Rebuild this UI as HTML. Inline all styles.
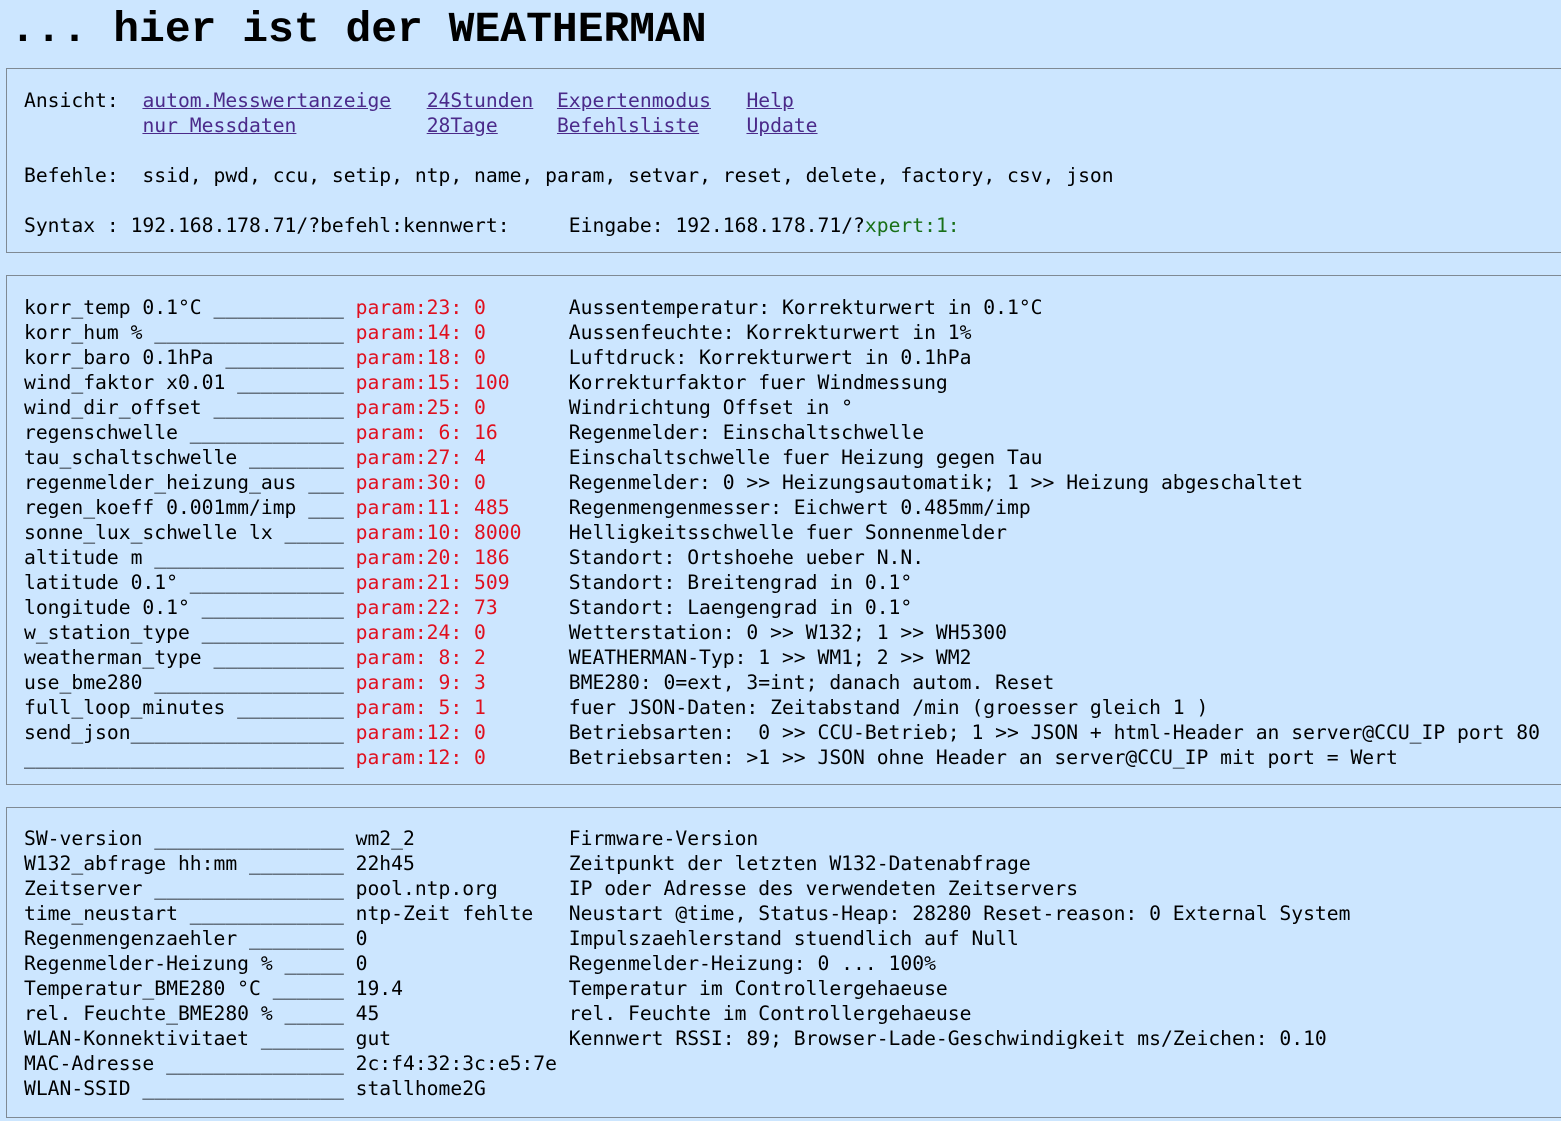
<!DOCTYPE html>
<html><head><meta charset="utf-8"><style>
html,body{margin:0;padding:0;background:#cce6ff;width:1561px;height:1121px;overflow:hidden}
body{position:relative;font-family:"Liberation Mono",monospace;color:#000}
h1{position:absolute;left:10px;top:5px;margin:0;font-size:43px;line-height:50px;font-weight:bold;white-space:pre}
.box{position:absolute;left:6px;width:1600px;border:1px solid #7f8a94;box-sizing:border-box}
.l{position:absolute;left:17px;font-family:"DejaVu Sans Mono","Liberation Mono",monospace;font-size:19.68px;line-height:25px;white-space:pre;height:25px}
.n{display:inline-block;width:28ch;overflow:hidden;vertical-align:top;white-space:pre}
.n span{display:inline-block;width:27ch;overflow:hidden;white-space:pre;vertical-align:top}
.p{display:inline-block;width:18ch;vertical-align:top;color:#e0101e}
.v{display:inline-block;width:18ch;vertical-align:top}
a{color:#4b2a8a;text-decoration:underline}
.g{color:#187018}
</style></head><body>
<h1>... hier ist der WEATHERMAN</h1>

<div class="box" style="top:68px;height:185px"></div>
<div class="l" style="left:24px;top:88px">Ansicht:  <a>autom.Messwertanzeige</a>   <a>24Stunden</a>  <a>Expertenmodus</a>   <a>Help</a></div>
<div class="l" style="left:24px;top:113px">          <a>nur Messdaten</a>           <a>28Tage</a>     <a>Befehlsliste</a>    <a>Update</a></div>
<div class="l" style="left:24px;top:163px">Befehle:  ssid, pwd, ccu, setip, ntp, name, param, setvar, reset, delete, factory, csv, json</div>
<div class="l" style="left:24px;top:213px">Syntax : 192.168.178.71/?befehl:kennwert:     Eingabe: 192.168.178.71/?<span class="g">xpert:1:</span></div>

<div class="box" style="top:275px;height:510px"></div>
<div style="position:absolute;left:24px;top:295px">
<div class="l" style="left:0;top:0"><span class="n"><span>korr_temp 0.1°C ______________________________</span></span><span class="p">param:23: 0</span>Aussentemperatur: Korrekturwert in 0.1°C</div>
<div class="l" style="left:0;top:25px"><span class="n"><span>korr_hum % ______________________________</span></span><span class="p">param:14: 0</span>Aussenfeuchte: Korrekturwert in 1%</div>
<div class="l" style="left:0;top:50px"><span class="n"><span>korr_baro 0.1hPa ______________________________</span></span><span class="p">param:18: 0</span>Luftdruck: Korrekturwert in 0.1hPa</div>
<div class="l" style="left:0;top:75px"><span class="n"><span>wind_faktor x0.01 ______________________________</span></span><span class="p">param:15: 100</span>Korrekturfaktor fuer Windmessung</div>
<div class="l" style="left:0;top:100px"><span class="n"><span>wind_dir_offset ______________________________</span></span><span class="p">param:25: 0</span>Windrichtung Offset in °</div>
<div class="l" style="left:0;top:125px"><span class="n"><span>regenschwelle ______________________________</span></span><span class="p">param: 6: 16</span>Regenmelder: Einschaltschwelle</div>
<div class="l" style="left:0;top:150px"><span class="n"><span>tau_schaltschwelle ______________________________</span></span><span class="p">param:27: 4</span>Einschaltschwelle fuer Heizung gegen Tau</div>
<div class="l" style="left:0;top:175px"><span class="n"><span>regenmelder_heizung_aus ______________________________</span></span><span class="p">param:30: 0</span>Regenmelder: 0 &gt;&gt; Heizungsautomatik; 1 &gt;&gt; Heizung abgeschaltet</div>
<div class="l" style="left:0;top:200px"><span class="n"><span>regen_koeff 0.001mm/imp ______________________________</span></span><span class="p">param:11: 485</span>Regenmengenmesser: Eichwert 0.485mm/imp</div>
<div class="l" style="left:0;top:225px"><span class="n"><span>sonne_lux_schwelle lx ______________________________</span></span><span class="p">param:10: 8000</span>Helligkeitsschwelle fuer Sonnenmelder</div>
<div class="l" style="left:0;top:250px"><span class="n"><span>altitude m ______________________________</span></span><span class="p">param:20: 186</span>Standort: Ortshoehe ueber N.N.</div>
<div class="l" style="left:0;top:275px"><span class="n"><span>latitude 0.1° ______________________________</span></span><span class="p">param:21: 509</span>Standort: Breitengrad in 0.1°</div>
<div class="l" style="left:0;top:300px"><span class="n"><span>longitude 0.1° ______________________________</span></span><span class="p">param:22: 73</span>Standort: Laengengrad in 0.1°</div>
<div class="l" style="left:0;top:325px"><span class="n"><span>w_station_type ______________________________</span></span><span class="p">param:24: 0</span>Wetterstation: 0 &gt;&gt; W132; 1 &gt;&gt; WH5300</div>
<div class="l" style="left:0;top:350px"><span class="n"><span>weatherman_type ______________________________</span></span><span class="p">param: 8: 2</span>WEATHERMAN-Typ: 1 &gt;&gt; WM1; 2 &gt;&gt; WM2</div>
<div class="l" style="left:0;top:375px"><span class="n"><span>use_bme280 ______________________________</span></span><span class="p">param: 9: 3</span>BME280: 0=ext, 3=int; danach autom. Reset</div>
<div class="l" style="left:0;top:400px"><span class="n"><span>full_loop_minutes ______________________________</span></span><span class="p">param: 5: 1</span>fuer JSON-Daten: Zeitabstand /min (groesser gleich 1 )</div>
<div class="l" style="left:0;top:425px"><span class="n"><span>send_json______________________________</span></span><span class="p">param:12: 0</span>Betriebsarten:  0 &gt;&gt; CCU-Betrieb; 1 &gt;&gt; JSON + html-Header an server@CCU_IP port 80</div>
<div class="l" style="left:0;top:450px"><span class="n"><span>______________________________</span></span><span class="p">param:12: 0</span>Betriebsarten: &gt;1 &gt;&gt; JSON ohne Header an server@CCU_IP mit port = Wert</div>
</div>

<div class="box" style="top:807px;height:311px"></div>
<div style="position:absolute;left:24px;top:826px">
<div class="l" style="left:0;top:0"><span class="n"><span>SW-version ______________________________</span></span><span class="v">wm2_2</span>Firmware-Version</div>
<div class="l" style="left:0;top:25px"><span class="n"><span>W132_abfrage hh:mm ______________________________</span></span><span class="v">22h45</span>Zeitpunkt der letzten W132-Datenabfrage</div>
<div class="l" style="left:0;top:50px"><span class="n"><span>Zeitserver ______________________________</span></span><span class="v">pool.ntp.org</span>IP oder Adresse des verwendeten Zeitservers</div>
<div class="l" style="left:0;top:75px"><span class="n"><span>time_neustart ______________________________</span></span><span class="v">ntp-Zeit fehlte</span>Neustart @time, Status-Heap: 28280 Reset-reason: 0 External System</div>
<div class="l" style="left:0;top:100px"><span class="n"><span>Regenmengenzaehler ______________________________</span></span><span class="v">0</span>Impulszaehlerstand stuendlich auf Null</div>
<div class="l" style="left:0;top:125px"><span class="n"><span>Regenmelder-Heizung % ______________________________</span></span><span class="v">0</span>Regenmelder-Heizung: 0 ... 100%</div>
<div class="l" style="left:0;top:150px"><span class="n"><span>Temperatur_BME280 °C ______________________________</span></span><span class="v">19.4</span>Temperatur im Controllergehaeuse</div>
<div class="l" style="left:0;top:175px"><span class="n"><span>rel. Feuchte_BME280 % ______________________________</span></span><span class="v">45</span>rel. Feuchte im Controllergehaeuse</div>
<div class="l" style="left:0;top:200px"><span class="n"><span>WLAN-Konnektivitaet ______________________________</span></span><span class="v">gut</span>Kennwert RSSI: 89; Browser-Lade-Geschwindigkeit ms/Zeichen: 0.10</div>
<div class="l" style="left:0;top:225px"><span class="n"><span>MAC-Adresse ______________________________</span></span><span class="v">2c:f4:32:3c:e5:7e</span></div>
<div class="l" style="left:0;top:250px"><span class="n"><span>WLAN-SSID ______________________________</span></span><span class="v">stallhome2G</span></div>
</div>
</body></html>
